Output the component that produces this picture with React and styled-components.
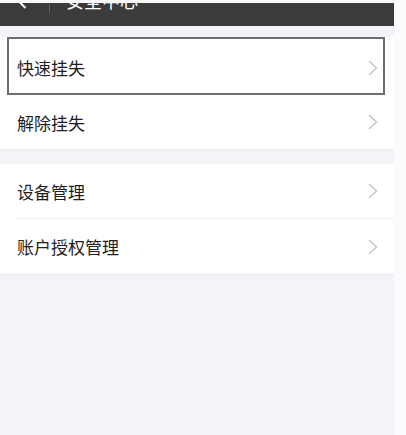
import React from 'react';
import styled, { createGlobalStyle } from 'styled-components';

const GlobalStyle = createGlobalStyle`
  body {
    margin: 0;
    background: #fafbfd;
    font-family: "Noto Sans CJK SC", "Noto Sans", sans-serif;
  }
`;

const Page = styled.div`
  width: 394px;
  min-height: 435px;
  background: #f4f4f8;
`;

const TopStrip = styled.div`
  height: 3px;
  background: #f8f8fa;
`;

const NavBar = styled.div`
  height: 23px;
  background: #3b3b3b;
  overflow: hidden;
`;

const NavInner = styled.div`
  display: flex;
  align-items: center;
  height: 18px;
  margin-top: -12px;
  padding-left: 16px;
`;

const NavDivider = styled.div`
  width: 1px;
  height: 26px;
  background: #5e5e5e;
  margin: 0 16px 0 22px;
`;

const NavTitle = styled.div`
  color: #ffffff;
  font-size: 18px;
  line-height: 18px;
`;

const Group = styled.div`
  background: #ffffff;
  margin-top: ${props => props.gap}px;
  border-bottom: 1px solid #e9e9ed;
`;

const Row = styled.div`
  display: flex;
  align-items: center;
  justify-content: space-between;
  height: ${props => props.h}px;
  box-sizing: border-box;
  padding: 0 16px 0 17px;
  font-size: 17px;
  color: #1e1e1e;
  ${props => props.focused && `
    margin: 1px 9px 0 7px;
    border: 2px solid #6e6e6e;
    padding: 3px 5px 0 8px;
  `}
`;

const Divider = styled.div`
  height: 1px;
  margin-left: 16px;
  background: #ededf0;
`;

const BackIcon = () => (
  <svg width="11" height="18" viewBox="0 0 11 18">
    <polyline points="9.5,1 1.5,9 9.5,17" fill="none" stroke="#ffffff" strokeWidth="2" />
  </svg>
);

const Chevron = () => (
  <svg width="10" height="16" viewBox="0 0 10 16">
    <polyline points="1,1 8.5,8 1,15" fill="none" stroke="#c2c2c6" strokeWidth="1.3" />
  </svg>
);

const App = () => (
  <>
    <GlobalStyle />
    <Page>
      <TopStrip />
      <NavBar>
        <NavInner>
          <BackIcon />
          <NavDivider />
          <NavTitle>安全中心</NavTitle>
        </NavInner>
      </NavBar>

      <Group gap={11}>
        <Row focused h={58}>
          快速挂失
          <Chevron />
        </Row>
        <Row h={54}>
          解除挂失
          <Chevron />
        </Row>
      </Group>

      <Group gap={14}>
        <Row h={54}>
          设备管理
          <Chevron />
        </Row>
        <Divider />
        <Row h={55}>
          账户授权管理
          <Chevron />
        </Row>
      </Group>
    </Page>
  </>
);

export default App;
